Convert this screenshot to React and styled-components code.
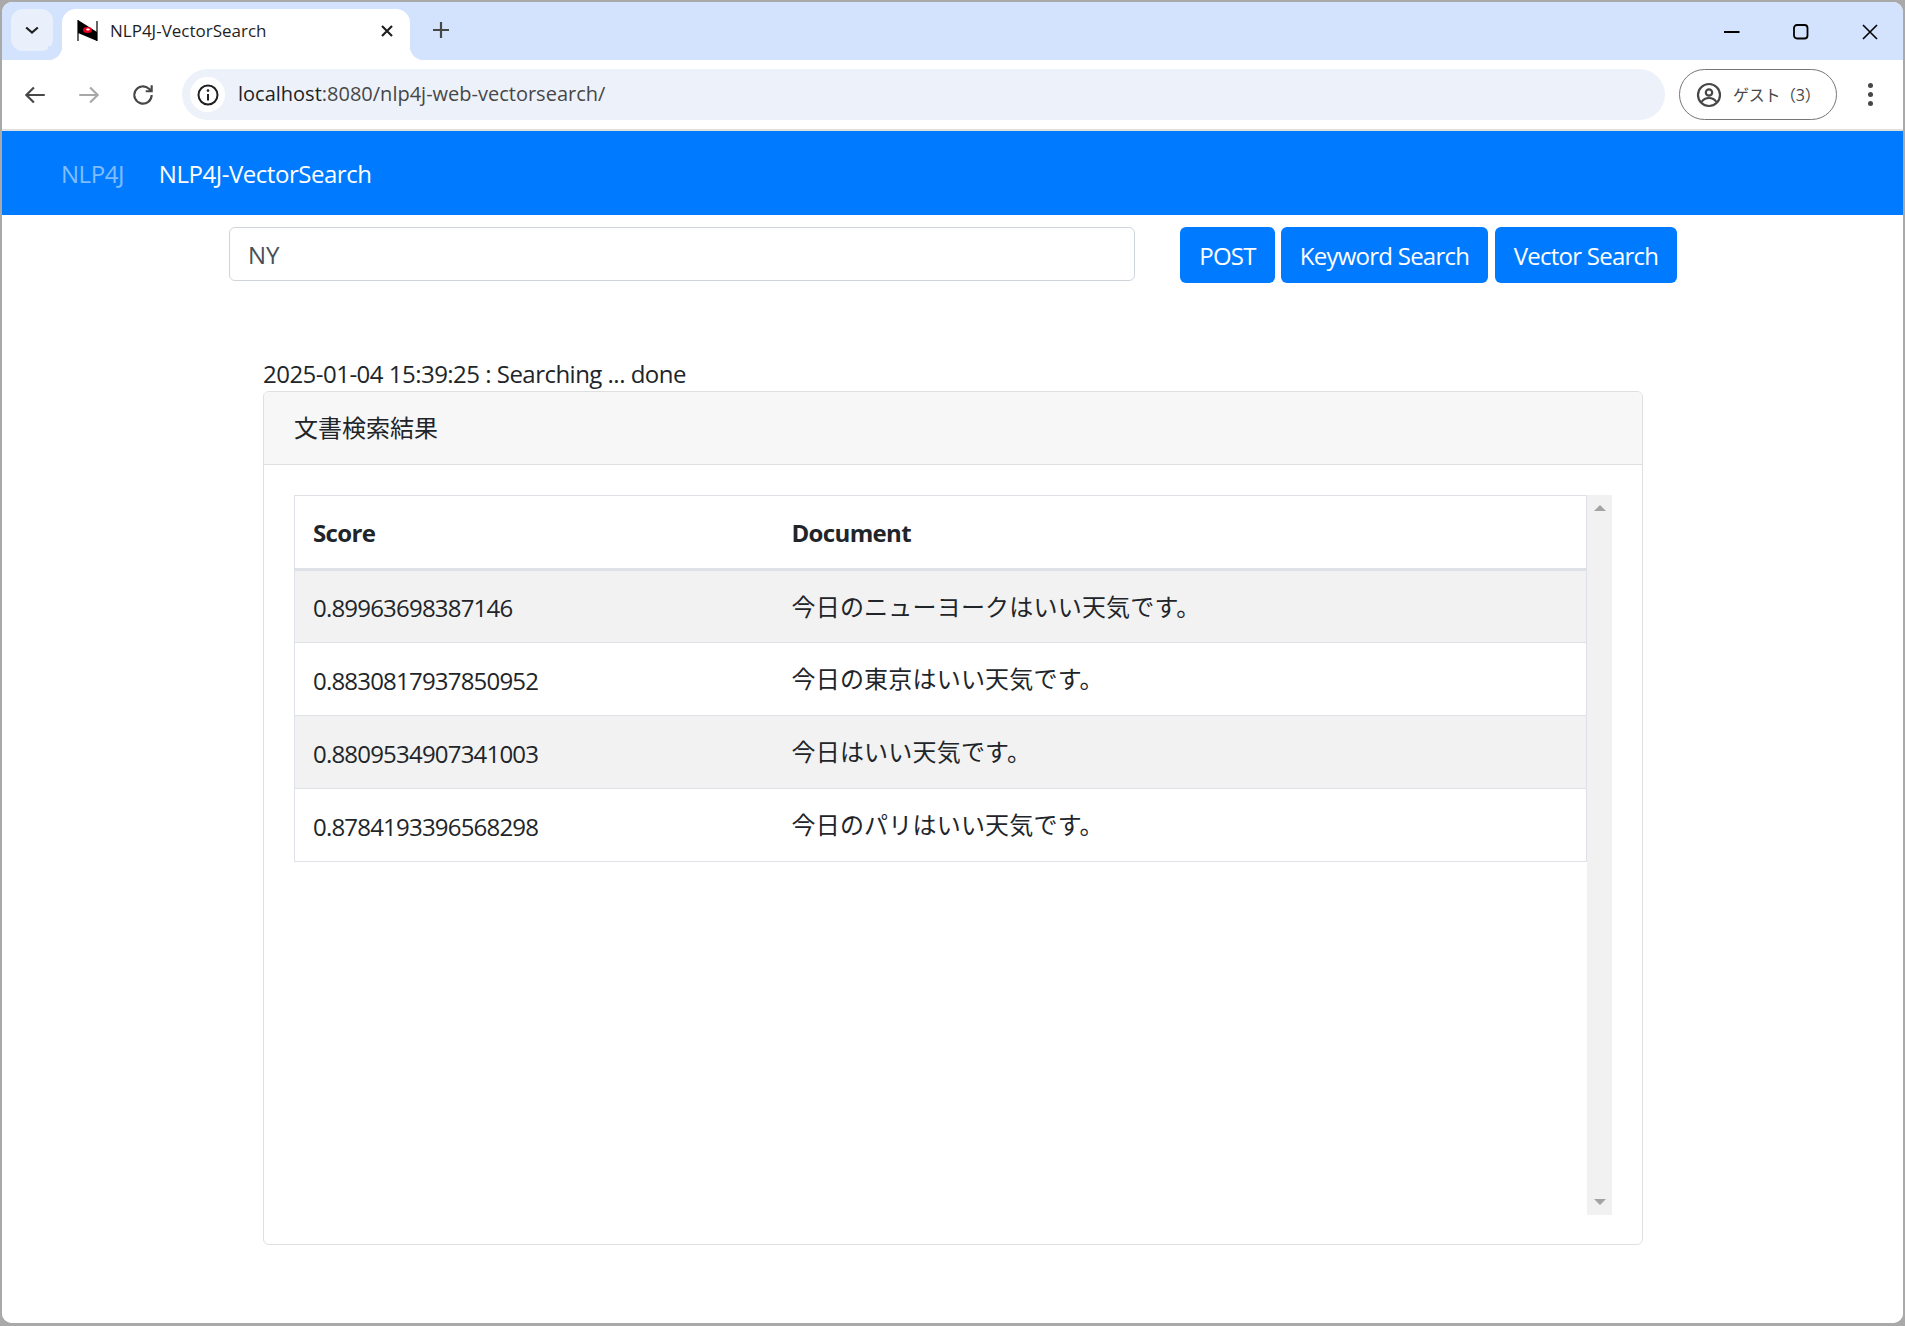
import styled, { createGlobalStyle } from "styled-components";

const FONT = `"Open Sans", "Noto Sans CJK JP", sans-serif`;

const Global = createGlobalStyle`
    * { box-sizing: border-box; }
    html, body { margin: 0; padding: 0; }
    body {
        background: #a9a9a9;
        font-family: ${FONT};
    }
`;

const rows = [
    ["0.89963698387146", "今日のニューヨークはいい天気です。"],
    ["0.8830817937850952", "今日の東京はいい天気です。"],
    ["0.8809534907341003", "今日はいい天気です。"],
    ["0.8784193396568298", "今日のパリはいい天気です。"],
];

function Stroke({ size = 24, color = "#474747", width = 2, children }) {
    return (
        <svg width={size} height={size} viewBox="0 0 24 24" fill="none" stroke={color} strokeWidth={width}>
            {children}
        </svg>
    );
}

export default function App() {
    return (
        <Desktop>
            <Global />
            <Window>
                <TabStrip>
                    <TabSearch>
                        <Stroke size={20} color="#1f1f1f" width={2.6}><path d="M5 9l7 6 7-6" /></Stroke>
                    </TabSearch>
                    <Tab>
                        <svg width="21" height="21" viewBox="0 0 21 21">
                            <path d="M1 0l19 12v9L1 13z" fill="#000" />
                            <path d="M1 0v21M20 1v20" stroke="#000" strokeWidth="1.2" />
                            <ellipse cx="10.500" cy="10" rx="4.500" ry="3" fill="#e8001c" />
                            <ellipse cx="11" cy="9.500" rx="1.800" ry="1.100" fill="#fff" />
                        </svg>
                        <TabTitle>NLP4J-VectorSearch</TabTitle>
                        <Stroke size={20} color="#1f1f1f" width={2.6}><path d="M6 6l12 12M18 6L6 18" /></Stroke>
                    </Tab>
                    <NewTab>
                        <Stroke size={24} color="#474747" width={2.2}><path d="M12 4v16M4 12h16" /></Stroke>
                    </NewTab>
                    <WinControls>
                        <svg width="16" height="16" viewBox="0 0 16 16"><path d="M0 8h15.5" stroke="#000" strokeWidth="2" /></svg>
                        <svg width="16" height="16" viewBox="0 0 16 16"><rect x="1" y="1" width="13.5" height="13.5" rx="3" fill="none" stroke="#000" strokeWidth="1.8" /></svg>
                        <svg width="16" height="16" viewBox="0 0 16 16"><path d="M1 1l14 14M15 1L1 15" stroke="#000" strokeWidth="1.6" /></svg>
                    </WinControls>
                </TabStrip>
                <Toolbar>
                    <NavIcons>
                        <Stroke size={26}><path d="M21 12H4M11 5l-7 7 7 7" /></Stroke>
                        <Stroke size={26} color="#a8a8a8"><path d="M3 12h17M13 5l7 7-7 7" /></Stroke>
                        <Stroke size={26}><path d="M20 12a8 8 0 1 1-2.500-5.800L20 8.500M20 3v5.500h-5.500" /></Stroke>
                    </NavIcons>
                    <Omnibox>
                        <InfoChip>
                            <svg width="24" height="24" viewBox="0 0 24 24" fill="none">
                                <circle cx="12" cy="12" r="9.500" stroke="#1f1f1f" strokeWidth="2" />
                                <path d="M12 11v6.500" stroke="#1f1f1f" strokeWidth="2" />
                                <circle cx="12" cy="7.600" r="1.300" fill="#1f1f1f" />
                            </svg>
                        </InfoChip>
                        <Url><b>localhost</b>:8080/nlp4j-web-vectorsearch/</Url>
                    </Omnibox>
                    <Profile>
                        <svg width="26" height="26" viewBox="0 0 26 26" fill="none">
                            <circle cx="13" cy="13" r="11" stroke="#474747" strokeWidth="2.200" />
                            <circle cx="13" cy="10.500" r="3.200" stroke="#474747" strokeWidth="2.200" />
                            <path d="M5.500 20c2-3 4.500-4 7.500-4s5.500 1 7.500 4" stroke="#474747" strokeWidth="2.200" />
                        </svg>
                        <ProfileName>ゲスト（3）</ProfileName>
                    </Profile>
                    <MenuDots><i /><i /><i /></MenuDots>
                </Toolbar>
                <Page>
                    <Navbar>
                        <Brand>NLP4J</Brand>
                        <NavLink>NLP4J-VectorSearch</NavLink>
                    </Navbar>
                    <SearchRow>
                        <SearchInput defaultValue="NY" />
                        <Buttons>
                            <Button $w={95}>POST</Button>
                            <Button $w={207}>Keyword Search</Button>
                            <Button $w={182} $gap={7}>Vector Search</Button>
                        </Buttons>
                    </SearchRow>
                    <Status>2025-01-04 15:39:25 : Searching ... done</Status>
                    <Card>
                        <CardHeader>文書検索結果</CardHeader>
                        <CardBody>
                            <TableScroll>
                                <TableArea>
                                    <Table>
                                        <thead>
                                            <tr>
                                                <Th $first>Score</Th>
                                                <Th>Document</Th>
                                            </tr>
                                        </thead>
                                        <tbody>
                                            {rows.map((r) => (
                                                <Row key={r[0]}>
                                                    <ScoreCell>{r[0]}</ScoreCell>
                                                    <DocCell>{r[1]}</DocCell>
                                                </Row>
                                            ))}
                                        </tbody>
                                    </Table>
                                </TableArea>
                                <Scrollbar>
                                    <Arrow />
                                    <Arrow $down />
                                </Scrollbar>
                            </TableScroll>
                        </CardBody>
                    </Card>
                </Page>
            </Window>
        </Desktop>
    );
}

const Desktop = styled.div`
    width: 1905px;
    height: 1326px;
    padding: 2px 2px 3px 2px;
    overflow: hidden;
`;
const Window = styled.div`
    height: 100%;
    background: #fff;
    border-radius: 10px;
    overflow: hidden;
    display: flex;
    flex-direction: column;
`;
const TabStrip = styled.div`
    height: 58px;
    background: #d3e3fd;
    display: flex;
    align-items: flex-end;
    padding-left: 9px;
`;
const TabSearch = styled.div`
    width: 42px;
    height: 42px;
    margin-bottom: 9px;
    border-radius: 12px;
    background: #e9f0fc;
    display: flex;
    align-items: center;
    justify-content: center;
`;
const Tab = styled.div`
    width: 348px;
    height: 51px;
    margin-left: 9px;
    padding: 0 13px 8px 15px;
    background: #fff;
    border-radius: 14px 14px 0 0;
    display: flex;
    align-items: center;
    position: relative;
    &::before, &::after {
        content: "";
        position: absolute;
        bottom: 0;
        width: 14px;
        height: 14px;
    }
    &::before {
        left: -14px;
        background: radial-gradient(circle at 0 0, #d3e3fd 14px, #fff 14.5px);
    }
    &::after {
        right: -14px;
        background: radial-gradient(circle at 100% 0, #d3e3fd 14px, #fff 14.5px);
    }
`;
const TabTitle = styled.span`
    flex: 1;
    margin-left: 12px;
    font-size: 17px;
    color: #1f1f1f;
    white-space: nowrap;
`;
const NewTab = styled.div`
    margin: 0 0 18px 19px;
    display: flex;
`;
const WinControls = styled.div`
    margin: 0 25px 20px auto;
    display: flex;
    gap: 53px;
    align-items: center;
`;
const Toolbar = styled.div`
    height: 71px;
    flex: none;
    background: #fff;
    border-bottom: 2px solid #e0e0e0;
    border-radius: 12px 12px 0 0;
    padding: 9px 0 9px 20px;
    display: flex;
    align-items: center;
`;
const NavIcons = styled.div`
    display: flex;
    gap: 28px;
    margin-right: 26px;
`;
const Omnibox = styled.div`
    width: 1483px;
    height: 51px;
    border-radius: 26px;
    background: #edf2fa;
    padding-left: 8px;
    display: flex;
    align-items: center;
`;
const InfoChip = styled.div`
    width: 35px;
    height: 35px;
    border-radius: 50%;
    background: #fff;
    display: flex;
    align-items: center;
    justify-content: center;
`;
const Url = styled.div`
    margin-left: 13px;
    padding-bottom: 2px;
    font-size: 20px;
    color: #474747;
    white-space: nowrap;
    b {
        font-weight: 400;
        color: #1f1f1f;
    }
`;
const Profile = styled.div`
    width: 158px;
    height: 51px;
    margin-left: 14px;
    border: 1.5px solid #747775;
    border-radius: 26px;
    padding-left: 16px;
    display: flex;
    align-items: center;
    gap: 11px;
`;
const ProfileName = styled.span`
    padding-bottom: 2px;
    font-size: 16px;
    letter-spacing: -0.3px;
    color: #474747;
    white-space: nowrap;
`;
const MenuDots = styled.div`
    margin-left: 31px;
    display: flex;
    flex-direction: column;
    gap: 4px;
    i {
        display: block;
        width: 5px;
        height: 5px;
        border-radius: 50%;
        background: #474747;
    }
`;
const Page = styled.div`
    flex: 1;
    background: #fff;
`;
const Navbar = styled.div`
    height: 84px;
    background: #007bff;
    padding-left: 59px;
    display: flex;
    align-items: center;
    font-size: 24px;
    letter-spacing: -0.47px;
`;
const Brand = styled.span`
    color: rgba(255, 255, 255, 0.5);
`;
const NavLink = styled.span`
    color: #fff;
    margin-left: 35px;
`;
const SearchRow = styled.div`
    display: flex;
    align-items: flex-start;
    padding: 12px 0 0 227px;
`;
const SearchInput = styled.input`
    width: 906px;
    height: 54px;
    padding: 0 18px;
    border: 1.5px solid #ced4da;
    border-radius: 6px;
    outline: none;
    font: 24px ${FONT};
    color: #495057;
`;
const Buttons = styled.div`
    margin-left: 45px;
    display: flex;
    gap: 6px;
`;
const Button = styled.button`
    width: ${(p) => p.$w}px;
    height: 56px;
    margin-left: ${(p) => (p.$gap ? p.$gap - 6 : 0)}px;
    padding: 0;
    border: none;
    border-radius: 6px;
    background: #007bff;
    color: #fff;
    font: 24px ${FONT};
    letter-spacing: -0.75px;
`;
const Status = styled.div`
    margin: 72px 0 0 261px;
    height: 36px;
    padding-top: 1px;
    font-size: 24px;
    line-height: 36px;
    letter-spacing: -0.52px;
    color: #212529;
`;
const Card = styled.div`
    width: 1380px;
    height: 854px;
    margin-left: 261px;
    border: 1px solid #dfdfdf;
    border-radius: 6px;
    overflow: hidden;
`;
const CardHeader = styled.div`
    height: 73px;
    padding: 0 30px 3px;
    background: #f7f7f7;
    border-bottom: 1px solid #dfdfdf;
    display: flex;
    align-items: center;
    font-size: 24px;
    color: #212529;
`;
const CardBody = styled.div`
    padding: 30px;
`;
const TableScroll = styled.div`
    height: 720px;
    display: flex;
`;
const TableArea = styled.div`
    flex: 1;
`;
const Table = styled.table`
    width: 100%;
    border-collapse: collapse;
    table-layout: fixed;
    font-size: 24px;
    color: #212529;
    border: 1px solid #dee2e6;
`;
const Th = styled.th`
    width: ${(p) => (p.$first ? "479px" : "auto")};
    height: 74px;
    padding: 0 18px;
    text-align: left;
    font-weight: 700;
    letter-spacing: -0.65px;
    border-bottom: 3px solid #dee2e6;
`;
const Row = styled.tr`
    &:nth-child(odd) {
        background: #f2f2f2;
    }
`;
const ScoreCell = styled.td`
    height: 73px;
    padding: 2px 18px 0;
    border-top: 1px solid #dee2e6;
    letter-spacing: -0.8px;
    white-space: nowrap;
`;
const DocCell = styled(ScoreCell)`
    padding: 0 18px 3px;
    letter-spacing: 0.2px;
`;
const Scrollbar = styled.div`
    width: 25px;
    background: #f1f1f1;
    padding: 10px 0;
    display: flex;
    flex-direction: column;
    justify-content: space-between;
    align-items: center;
`;
const Arrow = styled.div`
    width: 0;
    height: 0;
    border-left: 6px solid transparent;
    border-right: 6px solid transparent;
    border-bottom: ${(p) => (p.$down ? "0" : "6px solid #a3a3a3")};
    border-top: ${(p) => (p.$down ? "6px solid #a3a3a3" : "0")};
`;
